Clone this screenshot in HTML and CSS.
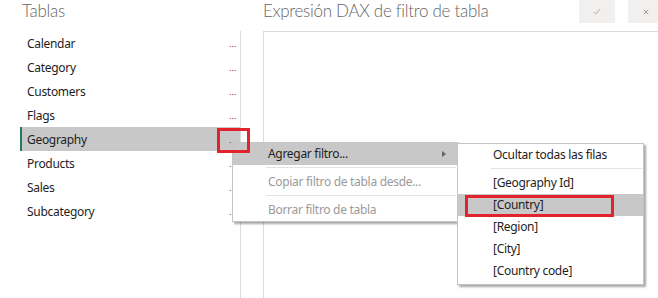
FILE: index.html
```html
<!DOCTYPE html>
<html lang="es">
<head>
<meta charset="utf-8">
<link rel="stylesheet" href="styles.css">
</head>
<body>
<div class="app">
  <aside class="tables">
    <h2 class="heading">Tablas</h2>
    <ul class="table-list">
      <li class="row"><span class="name">Calendar</span><span class="more">...</span></li>
      <li class="row"><span class="name">Category</span><span class="more">...</span></li>
      <li class="row"><span class="name">Customers</span><span class="more">...</span></li>
      <li class="row"><span class="name">Flags</span><span class="more">...</span></li>
      <li class="row active"><span class="name">Geography</span><span class="more">.</span></li>
      <li class="row"><span class="name">Products</span><span class="more">...</span></li>
      <li class="row"><span class="name">Sales</span><span class="more">...</span></li>
      <li class="row"><span class="name">Subcategory</span><span class="more">...</span></li>
    </ul>
  </aside>
  <main class="editor-pane">
    <div class="editor-head">
      <h2 class="heading">Expresión DAX de filtro de tabla</h2>
      <div class="actions">
        <button class="btn" aria-label="Aceptar">
          <svg width="8" height="7" viewBox="0 0 8 7"><path d="M0.8 4 L2.8 6 L7.2 0.8" fill="none" stroke="#b0b0b0" stroke-width="1"/></svg>
        </button>
        <button class="btn" aria-label="Cancelar">
          <svg width="6" height="6" viewBox="0 0 6 6"><path d="M0.8 0.8 L5.2 5.2 M5.2 0.8 L0.8 5.2" fill="none" stroke="#9a9a9a" stroke-width="1"/></svg>
        </button>
      </div>
    </div>
    <div class="editor"></div>
  </main>
</div>

<div class="menu context-menu">
  <div class="item selected">Agregar filtro...<span class="arrow"></span></div>
  <div class="sep"></div>
  <div class="item disabled">Copiar filtro de tabla desde...</div>
  <div class="sep"></div>
  <div class="item disabled">Borrar filtro de tabla</div>
</div>

<div class="menu submenu">
  <div class="item">Ocultar todas las filas</div>
  <div class="sep"></div>
  <div class="item">[Geography Id]</div>
  <div class="item selected">[Country]</div>
  <div class="item">[Region]</div>
  <div class="item">[City]</div>
  <div class="item">[Country code]</div>
</div>

<div class="callout callout-more"></div>
<div class="callout callout-country"></div>
</body>
</html>
```

FILE: styles.css
```css
html, body {
  margin: 0;
  padding: 0;
  background: #ffffff;
  overflow: hidden;
}

body {
  width: 658px;
  height: 298px;
  position: relative;
  font-family: "Noto Sans", "Open Sans", sans-serif;
  font-size: 12px;
  letter-spacing: -0.3px;
  color: #1e1e1e;
}

.app {
  display: flex;
  height: 298px;
}

.heading {
  margin: 0;
  font-family: Lato, "Noto Sans", sans-serif;
  font-weight: 300;
  font-size: 17px;
  line-height: normal;
  letter-spacing: -0.3px;
  color: #666666;
  white-space: nowrap;
}

.tables {
  width: 221px;
  padding-left: 20px;
  display: flex;
  flex-direction: column;
}

.tables .heading {
  padding-left: 2px;
  height: 31px;
}

.table-list {
  list-style: none;
  margin: 0;
  padding: 0;
  flex: 1;
  border-right: 1px solid #dcdcdc;
}

.row {
  height: 24px;
  display: flex;
  align-items: center;
  justify-content: space-between;
  padding-left: 7px;
  padding-right: 3px;
}

.row.active {
  background: #c8c8c8;
  box-shadow: inset 2px 0 0 #217a5b;
}

.more {
  font-family: "Liberation Sans", sans-serif;
  font-size: 9px;
  line-height: 9px;
  color: #5a1a80;
  letter-spacing: 0;
  position: relative;
  top: 1px;
  width: 8px;
}

.editor-pane {
  flex: 1;
  margin-left: 22px;
  margin-right: -6px;
  display: flex;
  flex-direction: column;
}

.editor-head {
  height: 31px;
  display: flex;
  justify-content: space-between;
  align-items: flex-start;
}

.actions {
  display: flex;
  gap: 13px;
}

.btn {
  width: 36px;
  height: 23px;
  border: 0;
  padding: 0;
  margin: 0;
  background: #f1f0ef;
  display: flex;
  align-items: center;
  justify-content: center;
}

.editor {
  flex: 1;
  border-top: 1px solid #dcdcdc;
  border-left: 1px solid #dcdcdc;
}

.menu {
  position: absolute;
  background: #ffffff;
  border: 1px solid #c4c4c4;
  box-shadow: 2px 2px 2px rgba(0, 0, 0, 0.35);
  white-space: nowrap;
}

.context-menu {
  left: 232px;
  top: 142px;
  width: 224px;
}

.context-menu .item {
  padding-left: 35px;
}

.submenu {
  left: 457px;
  top: 143px;
  width: 185px;
  padding-bottom: 2px;
}

.submenu .item {
  padding-left: 35px;
}

.item {
  height: 22px;
  line-height: 22px;
  position: relative;
}

.item.selected {
  background: #c8c8c8;
}

.item.disabled {
  color: #9a9a9a;
}

.sep {
  height: 1px;
  background: #e3e3e3;
  margin: 2px 1px 3px 33px;
}

.arrow {
  position: absolute;
  right: 11px;
  top: 8px;
  width: 0;
  height: 0;
  border-top: 3.5px solid transparent;
  border-bottom: 3.5px solid transparent;
  border-left: 4px solid #666666;
}

.callout {
  position: absolute;
  border: 3px solid #e3232b;
  box-sizing: border-box;
}

.callout-more {
  left: 217px;
  top: 128px;
  width: 33px;
  height: 25px;
}

.callout-country {
  left: 465px;
  top: 195px;
  width: 149px;
  height: 22px;
}
```
